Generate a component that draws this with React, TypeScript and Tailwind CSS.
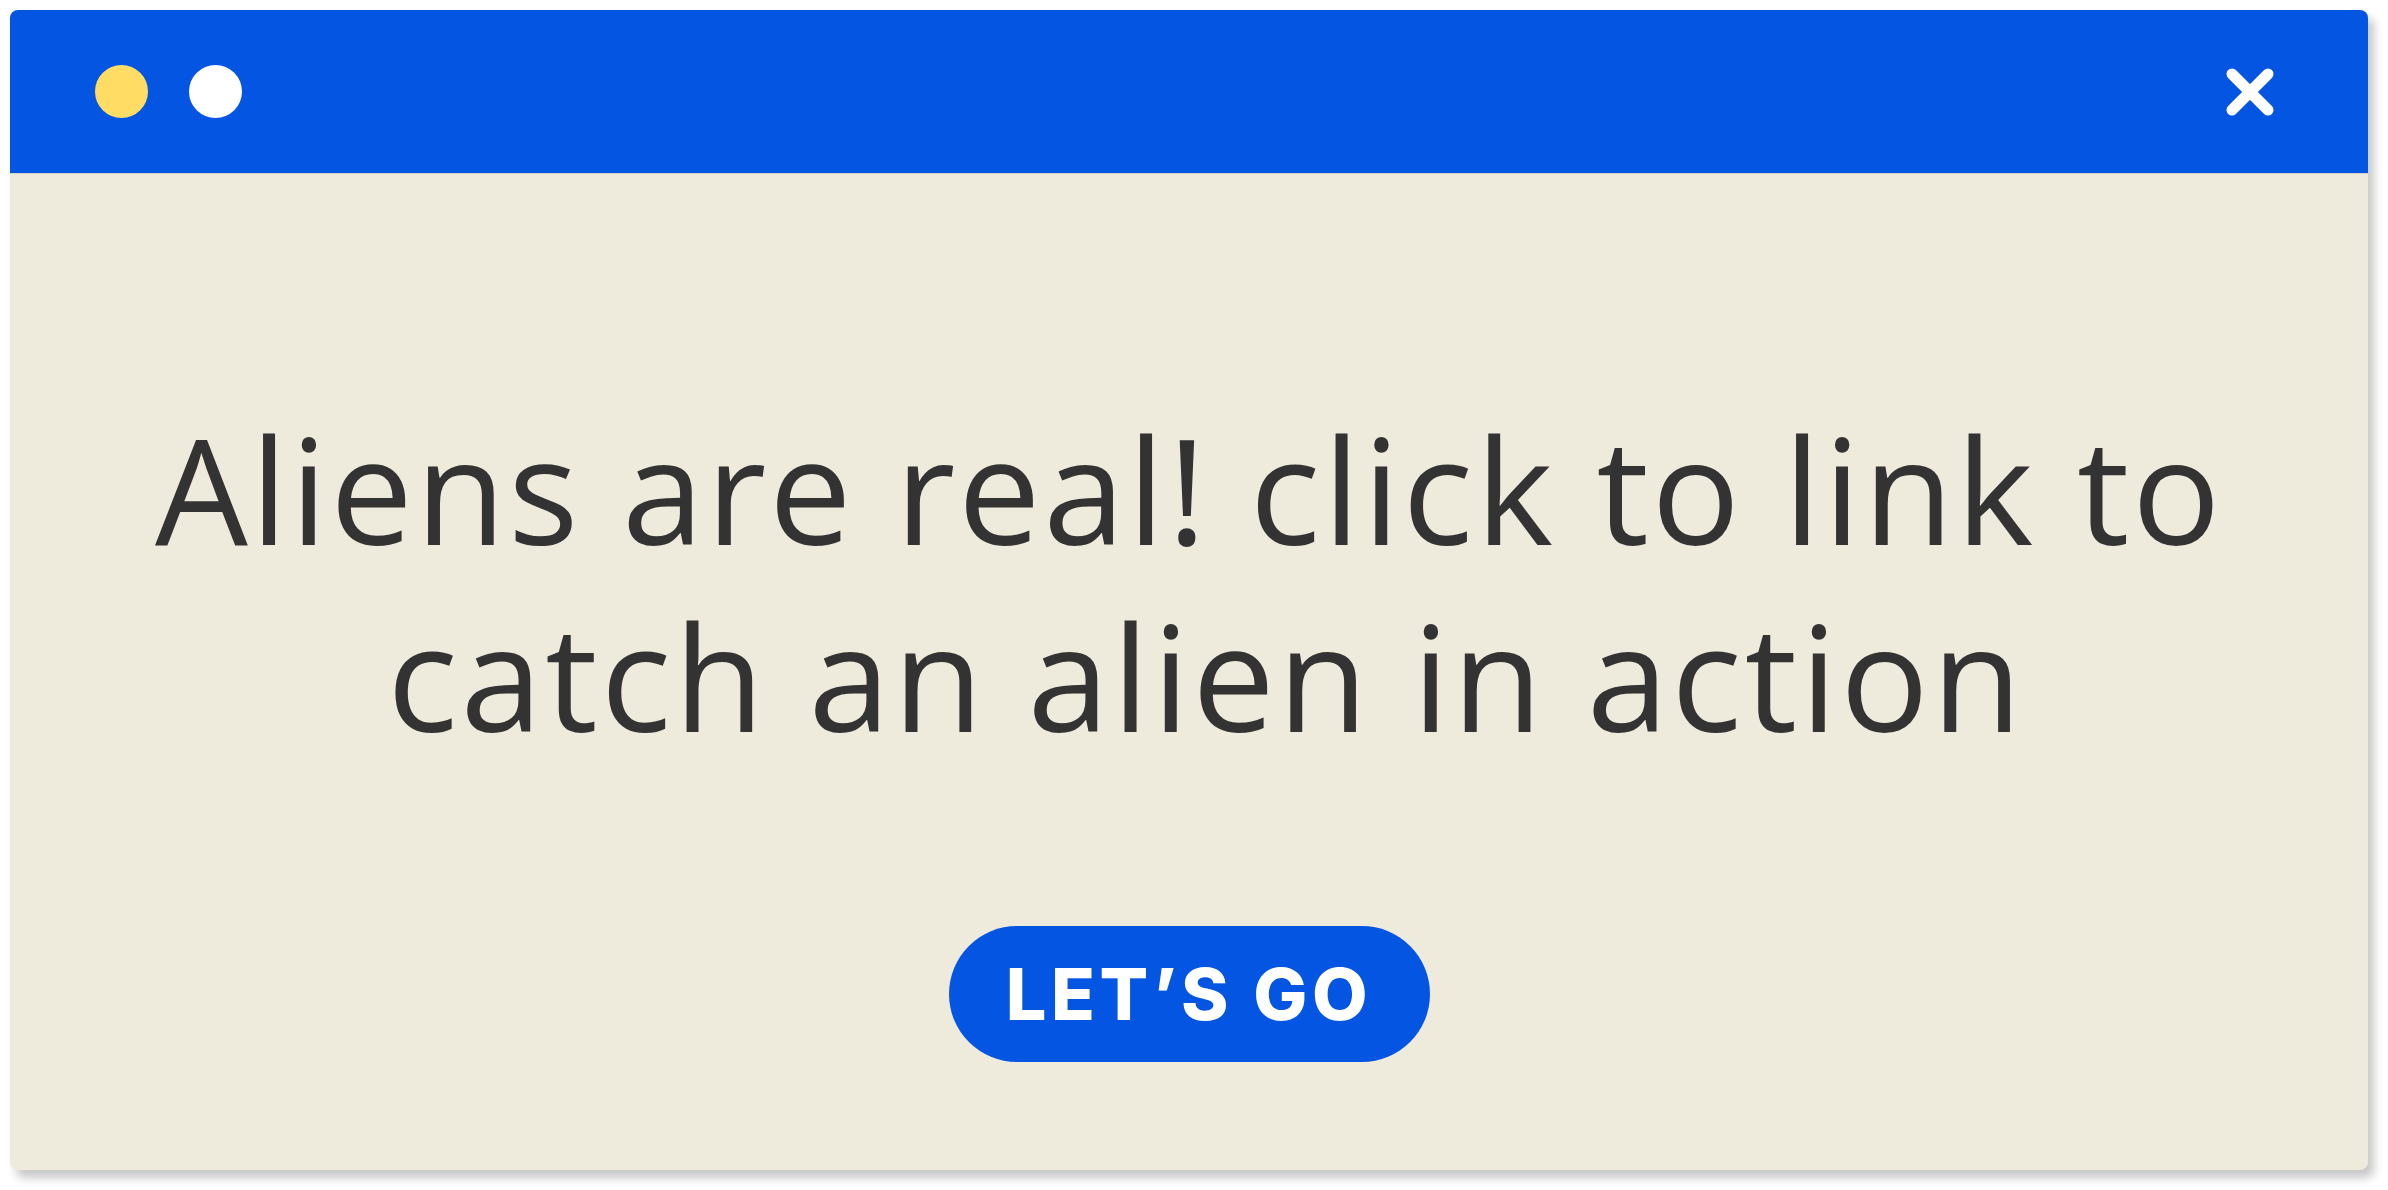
export default function App() {
  return (
    <div className="min-h-screen w-full bg-white p-[10px]">
      <div className="flex h-[1160px] w-[2358px] flex-col overflow-hidden rounded-[8px] bg-[#eeebdc] shadow-[6px_8px_10px_rgba(0,0,0,0.22)]">
        {/* barre de titre */}
        <div className="flex h-[164px] shrink-0 items-center justify-between border-b border-[#d4d2c8] bg-[#0555e3] pl-[85px] pr-[93px]">
          <div className="flex items-center gap-[41px]">
            <span className="block h-[53px] w-[53px] rounded-full bg-[#ffdc64]" />
            <span className="block h-[53px] w-[53px] rounded-full bg-white" />
          </div>
          <svg width="50" height="50" viewBox="0 0 50 50" className="block">
            <path d="M7 7 L43 43 M43 7 L7 43" stroke="white" strokeWidth="11" strokeLinecap="round" />
          </svg>
        </div>

        {/* contenu */}
        <div className="flex flex-1 flex-col items-center pt-[221px]">
          <div
            className="flex flex-col items-center text-[147px] leading-[187px] text-[#333333]"
            style={{ fontFamily: '"Open Sans", "Noto Sans", sans-serif' }}
          >
            <p className="tracking-[2.7px]">Aliens are real! click to link to</p>
            <p className="pl-[34px] tracking-[3px]">catch an alien in action</p>
          </div>
          <button
            className="mt-[157px] flex h-[136px] w-[481px] items-center justify-center rounded-full bg-[#0555e3] text-[72px] font-extrabold tracking-[4.5px] text-white"
            style={{ fontFamily: 'Inter, "Open Sans", sans-serif' }}
          >
            LET’S GO
          </button>
        </div>
      </div>
    </div>
  );
}
